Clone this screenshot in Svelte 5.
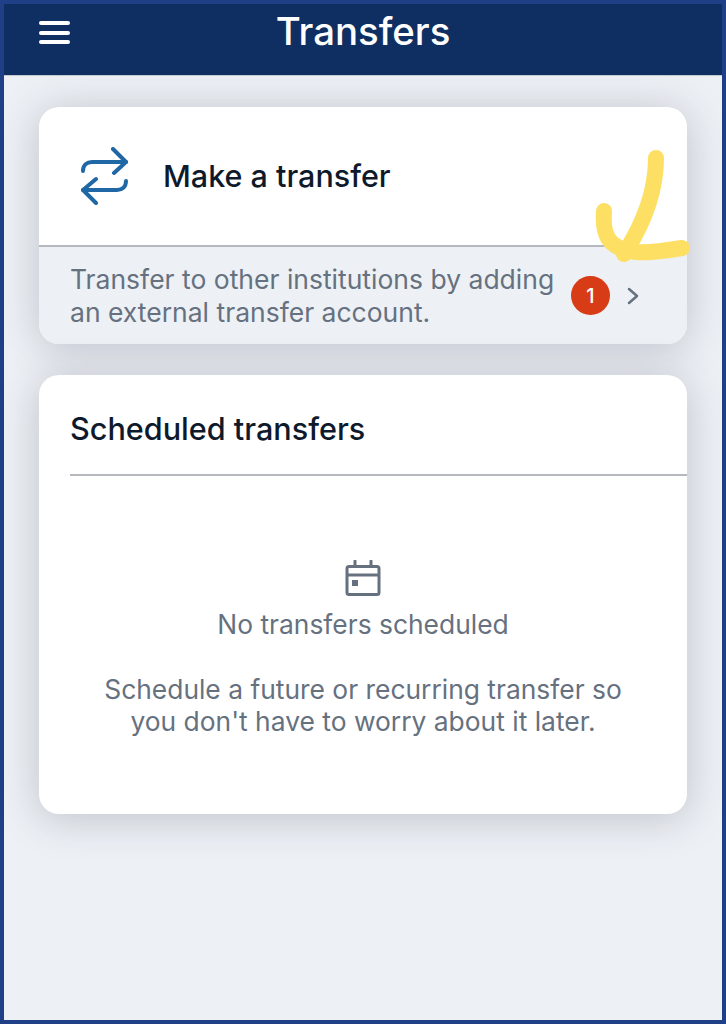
<script>
  const title = "Transfers";
</script>

<div class="frame">
  <div class="screen">
    <header class="topbar">
      <button class="menu" aria-label="Menu">
        <span></span>
        <span></span>
        <span></span>
      </button>
      <h1>{title}</h1>
    </header>

    <main class="content">
      <section class="card">
        <div class="make">
          <svg class="swap" width="48" height="58" viewBox="0 0 48 58" fill="none" stroke="#1f67a5" stroke-width="4" stroke-linecap="round" stroke-linejoin="round">
            <path d="M3 24 C3 18 7 15 12 15 L46 15" />
            <path d="M33 2 L46 15 L34 26" />
            <path d="M46 34 C46 40 42 43 37 43 L3 43" />
            <path d="M16 32 L3 43 L16 56" />
          </svg>
          <span class="make-label">Make a transfer</span>
        </div>
        <div class="external">
          <p>Transfer to other institutions by adding an external transfer account.</p>
          <span class="badge">1</span>
          <svg class="chevron" width="12" height="18" viewBox="0 0 12 18" fill="none" stroke="#66717f" stroke-width="2.5" stroke-linecap="round" stroke-linejoin="round">
            <path d="M2 2 L10 9 L2 16" />
          </svg>
        </div>
      </section>

      <section class="card scheduled">
        <h2>Scheduled transfers</h2>
        <div class="empty">
          <svg class="calendar" width="36" height="38" viewBox="0 0 36 38" fill="none" stroke="#66717f" stroke-width="3">
            <rect x="2" y="6.5" width="32" height="28" rx="2" />
            <path d="M2 15 H34" />
            <path d="M10 1 V6 M26 1 V6" stroke-linecap="round" />
            <rect x="7" y="20" width="6" height="6" fill="#66717f" stroke="none" />
          </svg>
          <p class="empty-title">No transfers scheduled</p>
          <p class="empty-text">Schedule a future or recurring transfer so<br />you don't have to worry about it later.</p>
        </div>
      </section>
    </main>

    <!-- hand drawn marker arrow on top of the screenshot -->
    <svg class="scribble" width="726" height="300" viewBox="0 0 726 300" fill="none" stroke="#fde063" stroke-width="16" stroke-linecap="round" stroke-linejoin="round">
      <path d="M656 158 C656 190 646 220 624 254" />
      <path d="M604 211 C603 225 605 237 612 243 C626 255 645 254 682 248" />
    </svg>
  </div>
</div>

<style>
  :global(body) {
    margin: 0;
    background: #1f3f87;
  }

  .frame {
    box-sizing: border-box;
    width: 726px;
    height: 1024px;
    padding: 4px;
    background: #1f3f87;
    font-family: Inter, "Liberation Sans", sans-serif;
  }

  .screen {
    height: 100%;
    display: flex;
    flex-direction: column;
    background: #edf0f5;
  }

  .topbar {
    height: 71px;
    flex: none;
    position: relative;
    display: flex;
    justify-content: center;
    background: #0f2f63;
    border-bottom: 1px solid #c5cad2;
    box-sizing: content-box;
  }

  .topbar h1 {
    margin: 6px 0 0;
    font-size: 38.4px;
    line-height: 42px;
    font-weight: 500;
    color: #fff;
  }

  .menu {
    position: absolute;
    left: 35px;
    top: 17px;
    width: 31px;
    padding: 0;
    display: flex;
    flex-direction: column;
    gap: 5.5px;
    border: 0;
    background: none;
  }

  .menu span {
    display: block;
    height: 4px;
    border-radius: 2px;
    background: #fff;
  }

  .content {
    padding: 31px 35px 0;
    display: flex;
    flex-direction: column;
    gap: 31px;
  }

  .card {
    border-radius: 20px;
    background: #fff;
    box-shadow: 0 4px 40px rgba(50, 60, 75, 0.25);
    overflow: hidden;
  }

  .make {
    height: 140px;
    box-sizing: border-box;
    display: flex;
    align-items: center;
    gap: 35px;
    padding-left: 41px;
    border-bottom: 2px solid #b5b8bc;
  }

  .swap {
    flex: none;
  }

  .make-label {
    margin-top: -2px;
    font-size: 30.5px;
    font-weight: 500;
    color: #0e1a2b;
  }

  .external {
    height: 97px;
    box-sizing: border-box;
    display: flex;
    align-items: center;
    padding: 0 48px 0 31px;
    background: #edf0f5;
  }

  .external p {
    margin: 0;
    flex: 1;
    max-width: 500px;
    font-size: 26.5px;
    line-height: 33px;
    color: #66717f;
  }

  .badge {
    width: 39px;
    height: 39px;
    flex: none;
    margin-left: auto;
    display: flex;
    align-items: center;
    justify-content: center;
    border-radius: 50%;
    background: #d73c16;
    color: #fff;
    font-size: 20px;
    font-weight: 500;
  }

  .chevron {
    flex: none;
    margin-left: 17px;
  }

  .scheduled {
    height: 439px;
    padding-left: 31px;
  }

  .scheduled h2 {
    height: 101px;
    box-sizing: border-box;
    margin: 0;
    padding-top: 36px;
    font-size: 30.6px;
    line-height: 36px;
    font-weight: 500;
    color: #0e1a2b;
    border-bottom: 2px solid #b5b8bc;
  }

  .empty {
    margin-left: -31px;
    padding-top: 84px;
    display: flex;
    flex-direction: column;
    align-items: center;
    text-align: center;
    color: #66717f;
    font-size: 26.4px;
    line-height: 32px;
  }

  .empty p {
    margin: 0;
  }

  .empty-title {
    margin-top: 10px !important;
  }

  .empty-text {
    margin-top: 33px !important;
  }

  .scribble {
    position: absolute;
    top: 0;
    left: 0;
    pointer-events: none;
  }
</style>
